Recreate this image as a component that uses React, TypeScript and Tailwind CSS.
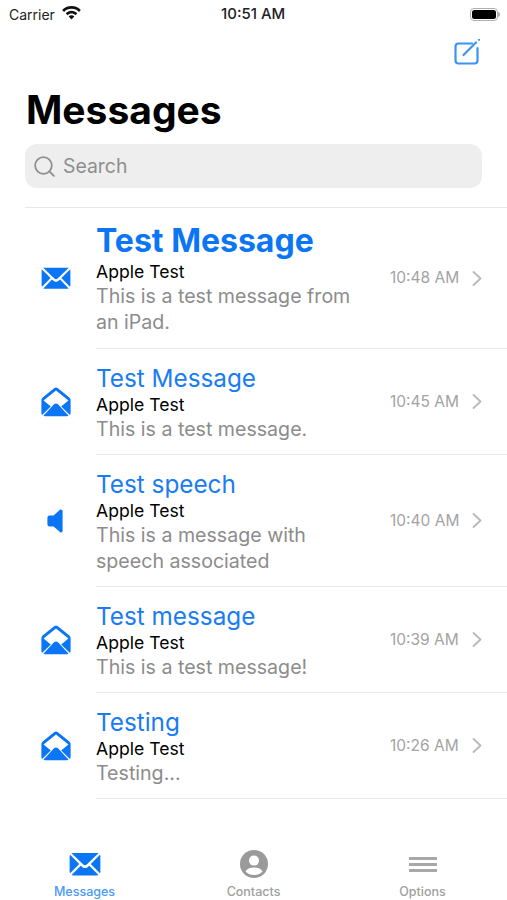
import React from 'react';
import { Search } from 'lucide-react';

const ClosedEnvelope: React.FC<{ className?: string }> = ({ className }) => (
  <svg viewBox="0 0 30 24" className={className} fill="#0a75f5">
    <path d="M2.2 0.8 H27.8 L16.6 11.6 Q15 13 13.4 11.6 Z" />
    <path d="M1 2.4 L9.6 11 L1 19.8 Q0.6 19 0.6 18 V4 Q0.6 3 1 2.4 Z" />
    <path d="M29 2.4 L20.4 11 L29 19.8 Q29.4 19 29.4 18 V4 Q29.4 3 29 2.4 Z" />
    <path d="M2.4 21.4 L11 12.6 L12.4 13.8 Q15 16 17.6 13.8 L19 12.6 L27.6 21.4 Q27 21.8 26 21.8 H4 Q3 21.8 2.4 21.4 Z" />
  </svg>
);

const OpenEnvelope: React.FC<{ className?: string }> = ({ className }) => (
  <svg viewBox="0 0 30 30" className={className} fill="#0a75f5">
    <path
      fillRule="evenodd"
      d="M15 0.4 Q15.8 0.4 16.6 1 L28.4 10.4 Q29.6 11.4 29.6 13 V26 Q29.6 27.2 29 28 L20.2 19.6 L27.400 13.400 L15 3.400 L2.600 13.400 L9.800 19.600 L1 28 Q0.4 27.2 0.4 26 V13 Q0.4 11.4 1.6 10.4 L13.4 1 Q14.2 0.4 15 0.4 Z"
    />
    <path d="M15 16.4 Q16 16.4 17 17.2 L27.6 28.8 Q27 29.2 26 29.2 H4 Q3 29.2 2.4 28.8 L13 17.2 Q14 16.4 15 16.4 Z" />
  </svg>
);

const Speaker: React.FC<{ className?: string }> = ({ className }) => (
  <svg viewBox="0 0 16 24" className={className} fill="#0a75f5">
    <path d="M13.6 0.4 Q15.6 0.2 15.6 2 V22 Q15.6 23.8 13.6 23.4 Q13 23.2 12.4 22.6 L6.6 17.4 H2.6 Q0.4 17.4 0.4 15.2 V8.8 Q0.4 6.6 2.6 6.6 H6.6 L12.4 1.2 Q13 0.6 13.6 0.4 Z" />
  </svg>
);

const ComposeIcon = () => (
  <svg viewBox="0 0 26 26" className="w-[26px] h-[26px]" fill="none" stroke="#3b93f3" strokeWidth="2.2" strokeLinecap="round">
    <path d="M18 4.500 H4.500 Q1.500 4.500 1.500 7.500 V21.500 Q1.500 24.500 4.500 24.500 H20.500 Q23.500 24.500 23.500 21.500 V9" />
    <path d="M9.500 16 L22 3.500" />
    <path d="M25 0.800 L25.200 0.600" />
  </svg>
);

const ContactIcon = () => (
  <svg viewBox="0 0 28 28" className="w-[28px] h-[28px]">
    <circle cx="14" cy="14" r="14" fill="#9a9a9a" />
    <circle cx="14" cy="10.600" r="5" fill="#fff" />
    <path d="M5.500 21.500 Q7.500 17.500 14 17.500 Q20.500 17.500 22.500 21.500 Q19 25 14 25 Q9 25 5.500 21.500 Z" fill="#fff" />
  </svg>
);

const Chevron = () => (
  <svg viewBox="0 0 10 15" className="w-[10px] h-[15px]" fill="none" stroke="#b8b8b8" strokeWidth="1.800" strokeLinecap="round" strokeLinejoin="round">
    <path d="M1.500 1 L8.500 7.500 L1.500 14" />
  </svg>
);

const messages = [
  { title: 'Test Message', unread: true, body: ['This is a test message from', 'an iPad.'], time: '10:48 AM', icon: 'closed' },
  { title: 'Test Message', unread: false, body: ['This is a test message.'], time: '10:45 AM', icon: 'open' },
  { title: 'Test speech', unread: false, body: ['This is a message with', 'speech associated'], time: '10:40 AM', icon: 'speech' },
  { title: 'Test message', unread: false, body: ['This is a test message!'], time: '10:39 AM', icon: 'open' },
  { title: 'Testing', unread: false, body: ['Testing...'], time: '10:26 AM', icon: 'open' },
];

const MessageRow: React.FC<{ msg: (typeof messages)[number] }> = ({ msg }) => (
  <div className="flex items-stretch">
    <div className="w-[96px] shrink-0 flex items-center justify-center pl-[16px]">
      <div className="w-[30px] flex justify-center">
        {msg.icon === 'closed' && <ClosedEnvelope className="w-[30px] h-[24px]" />}
        {msg.icon === 'open' && <OpenEnvelope className="w-[30px] h-[30px]" />}
        {msg.icon === 'speech' && <Speaker className="w-[16px] h-[24px] -ml-[2px]" />}
      </div>
    </div>
    <div className="flex-1 flex items-center border-b border-[#e8e8e8]">
      <div className="w-[294px] shrink-0">
        {msg.unread ? (
          <div className="text-[32px] leading-[40px] font-bold text-[#0a75f5] pt-[13px]">{msg.title}</div>
        ) : (
          <div className="text-[24.300px] leading-[31px] text-[#1a7cf2] pt-[14px]">{msg.title}</div>
        )}
        <div className="text-[17.600px] leading-[22px] text-black">Apple Test</div>
        {msg.body.map((line) => (
          <div key={line} className="text-[19.600px] leading-[26px] text-[#8c8c8c] whitespace-nowrap">
            {line}
          </div>
        ))}
        <div className={msg.unread ? 'h-[13px]' : 'h-[12px]'} />
      </div>
      <span className="text-[15.500px] text-[#a3a3a3] w-[82px] shrink-0 whitespace-nowrap">{msg.time}</span>
      <Chevron />
    </div>
  </div>
);

const App: React.FC = () => {
  return (
    <div className="w-[507px] h-[900px] bg-white overflow-hidden flex flex-col font-['Inter',sans-serif]">
      {/* status bar */}
      <div className="h-[28px] flex items-center justify-between relative pl-[9px] pr-[7px] shrink-0">
        <div className="flex items-center gap-[7px]">
          <span className="text-[14px] text-[#222]">Carrier</span>
          <svg viewBox="0 0 20 15" className="w-[19px] h-[14px] -mt-[2px]" fill="#111">
            <path d="M10 0 C14 0 17.500 1.600 20 4.200 L18 6.300 C16 4.200 13.200 2.900 10 2.900 C6.800 2.900 4 4.200 2 6.300 L0 4.200 C2.500 1.600 6 0 10 0 Z" />
            <path d="M10 5.100 C12.500 5.100 14.600 6.100 16.200 7.700 L14.200 9.800 C13.100 8.700 11.600 8 10 8 C8.400 8 6.900 8.700 5.800 9.800 L3.800 7.700 C5.400 6.100 7.500 5.100 10 5.100 Z" />
            <path d="M10 10 C11.200 10 12.200 10.400 13 11.200 L10 14.500 L7 11.200 C7.800 10.400 8.800 10 10 10 Z" />
          </svg>
        </div>
        <span className="absolute left-[221px] text-[15px] font-medium text-[#222]">10:51 AM</span>
        <div className="flex items-center">
          <div className="w-[28px] h-[13px] rounded-[4px] border border-[#b0b0b0] p-[1px]">
            <div className="w-full h-full rounded-[2.500px] bg-black" />
          </div>
          <div className="w-[2px] h-[5px] bg-[#b0b0b0] rounded-r-sm" />
        </div>
      </div>

      {/* nav */}
      <div className="h-[44px] pt-[11px] pr-[27px] flex justify-end shrink-0">
        <ComposeIcon />
      </div>
      <h1 className="text-[39px] leading-[44px] font-bold text-black pl-[26px] mt-[16px] shrink-0">Messages</h1>
      <div className="mx-[25px] mt-[12px] h-[44px] rounded-[12px] bg-[#eeeeee] flex items-center pl-[7px] gap-[6px] text-[#8e8e8e] shrink-0">
        <Search className="w-[25px] h-[25px]" strokeWidth={1.7} />
        <span className="text-[19.400px] pt-[2px]">Search</span>
      </div>
      <div className="ml-[25px] mt-[19px] border-b border-[#e8e8e8] shrink-0" />

      {/* list */}
      <div className="flex-1 min-h-0">
        {messages.map((msg, i) => (
          <MessageRow key={i} msg={msg} />
        ))}
      </div>

      {/* tab bar */}
      <div className="h-[54px] flex shrink-0 text-[12.500px] leading-[16px] font-medium">
        <div className="flex-1 flex flex-col items-center justify-end text-[#4a9af5]">
          <ClosedEnvelope className="w-[32px] h-[26px]" />
          <span className="mt-[6px]">Messages</span>
        </div>
        <div className="flex-1 flex flex-col items-center justify-end text-[#a0a0a0]">
          <ContactIcon />
          <span className="mt-[6px]">Contacts</span>
        </div>
        <div className="flex-1 flex flex-col items-center justify-end text-[#a0a0a0]">
          <div className="h-[28px] w-[28px] flex flex-col justify-center gap-[3px]">
            <div className="h-[3px] bg-[#a8a8a8]" />
            <div className="h-[3px] bg-[#a8a8a8]" />
            <div className="h-[3px] bg-[#a8a8a8]" />
          </div>
          <span className="mt-[6px]">Options</span>
        </div>
      </div>
    </div>
  );
};

export default App;
